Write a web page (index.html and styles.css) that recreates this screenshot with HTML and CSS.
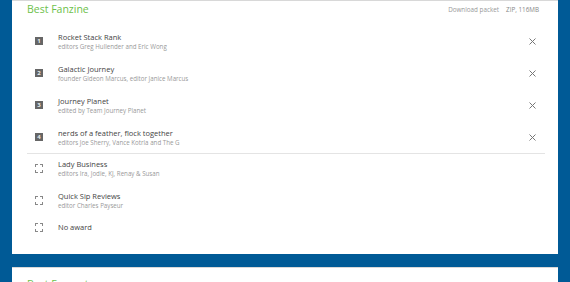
FILE: index.html
```html
<!DOCTYPE html>
<html lang="en">
<head>
<meta charset="utf-8">
<title>Hugo ballot</title>
<link rel="stylesheet" href="styles.css">
</head>
<body>
<!-- Category card -->
<div class="card">
	<div class="card-head">
		<h2>Best Fanzine</h2>
		<div class="packet"><span>Download packet</span><span>ZIP, 116MB</span></div>
	</div>
	<!-- Ranked entries -->
	<ul class="ranked">
		<li class="entry">
			<span class="badge">1</span>
			<div class="info"><div class="name">Rocket Stack Rank</div><div class="by">editors Greg Hullender and Eric Wong</div></div>
			<svg class="remove" viewBox="0 0 7 7" width="7" height="7"><path d="M0.5,0.5L6.5,6.5M6.5,0.5L0.5,6.5"/></svg>
		</li>
		<li class="entry">
			<span class="badge">2</span>
			<div class="info"><div class="name">Galactic Journey</div><div class="by">founder Gideon Marcus, editor Janice Marcus</div></div>
			<svg class="remove" viewBox="0 0 7 7" width="7" height="7"><path d="M0.5,0.5L6.5,6.5M6.5,0.5L0.5,6.5"/></svg>
		</li>
		<li class="entry">
			<span class="badge">3</span>
			<div class="info"><div class="name">Journey Planet</div><div class="by">edited by Team Journey Planet</div></div>
			<svg class="remove" viewBox="0 0 7 7" width="7" height="7"><path d="M0.5,0.5L6.5,6.5M6.5,0.5L0.5,6.5"/></svg>
		</li>
		<li class="entry">
			<span class="badge">4</span>
			<div class="info"><div class="name">nerds of a feather, flock together</div><div class="by">editors Joe Sherry, Vance Kotrla and The G</div></div>
			<svg class="remove" viewBox="0 0 7 7" width="7" height="7"><path d="M0.5,0.5L6.5,6.5M6.5,0.5L0.5,6.5"/></svg>
		</li>
	</ul>
	<!-- Unranked entries -->
	<ul class="unranked">
		<li class="entry">
			<span class="slot"></span>
			<div class="info"><div class="name">Lady Business</div><div class="by">editors Ira, Jodie, KJ, Renay &amp; Susan</div></div>
		</li>
		<li class="entry">
			<span class="slot"></span>
			<div class="info"><div class="name">Quick Sip Reviews</div><div class="by">editor Charles Payseur</div></div>
		</li>
		<li class="entry single">
			<span class="slot"></span>
			<div class="info"><div class="name">No award</div></div>
		</li>
	</ul>
</div>
<!-- Next category -->
<div class="card next">
	<div class="card-head">
		<h2>Best Fancast</h2>
	</div>
</div>
</body>
</html>
```

FILE: styles.css
```css
/*Basic body design*/
body {
	font-family: "Open Sans", "Liberation Sans", sans-serif;
	background-color: #005a96;
	margin: 0;
	padding: 0 12px;
}

/*Card*/
div.card {
	background-color: #fff;
	border-top: 1px solid #d8d8d8;
	margin-bottom: 13px;
	padding: 0 13px 0 15px;
	height: 253px;
}

div.card.next {
	padding-top: 8px;
}

/*Card header*/
div.card-head {
	justify-content: space-between;
	align-items: flex-start;
	display: flex;
}

div.card-head h2 {
	font-weight: normal;
	font-size: 10.5px;
	line-height: 16px;
	color: #6dbf4b;
	margin: 0;
}

div.packet {
	font-size: 6.3px;
	color: #999;
	padding-top: 4px;
	margin-right: 6px;
	display: flex;
	gap: 7px;
}

div.packet span + span {
	color: #888;
}

/*Entry lists*/
ul.ranked, ul.unranked {
	list-style: none;
	padding: 0;
	margin: 0;
}

ul.ranked {
	border-bottom: 1px solid #e4e4e4;
	padding-top: 8px;
}

ul.unranked {
	margin-top: -2px;
}

li.entry {
	align-items: center;
	display: flex;
	height: 32px;
}

li.single {
	height: 22px;
}

/*Rank badge*/
span.badge {
	background-color: #666;
	justify-content: center;
	align-items: center;
	font-size: 6px;
	font-weight: bold;
	color: #eee;
	display: flex;
	margin: 0 15px 0 8px;
	height: 8px;
	width: 8px;
}

/*Empty slot*/
span.slot {
	margin: 0 15px 0 8px;
	height: 9px;
	width: 8px;
	background:
		linear-gradient(#888, #888) left top / 3px 1px no-repeat,
		linear-gradient(#888, #888) left top / 1px 3px no-repeat,
		linear-gradient(#888, #888) right top / 3px 1px no-repeat,
		linear-gradient(#888, #888) right top / 1px 3px no-repeat,
		linear-gradient(#888, #888) left bottom / 3px 1px no-repeat,
		linear-gradient(#888, #888) left bottom / 1px 3px no-repeat,
		linear-gradient(#888, #888) right bottom / 3px 1px no-repeat,
		linear-gradient(#888, #888) right bottom / 1px 3px no-repeat;
}

div.info {
	flex: 1;
}

div.name {
	font-size: 7.5px;
	line-height: 10px;
	color: #444;
}

div.by {
	font-size: 6.2px;
	line-height: 9px;
	color: #999;
}

/*Remove icon*/
svg.remove {
	stroke: #777;
	stroke-width: 1;
	fill: none;
	margin-right: 9px;
}
```
